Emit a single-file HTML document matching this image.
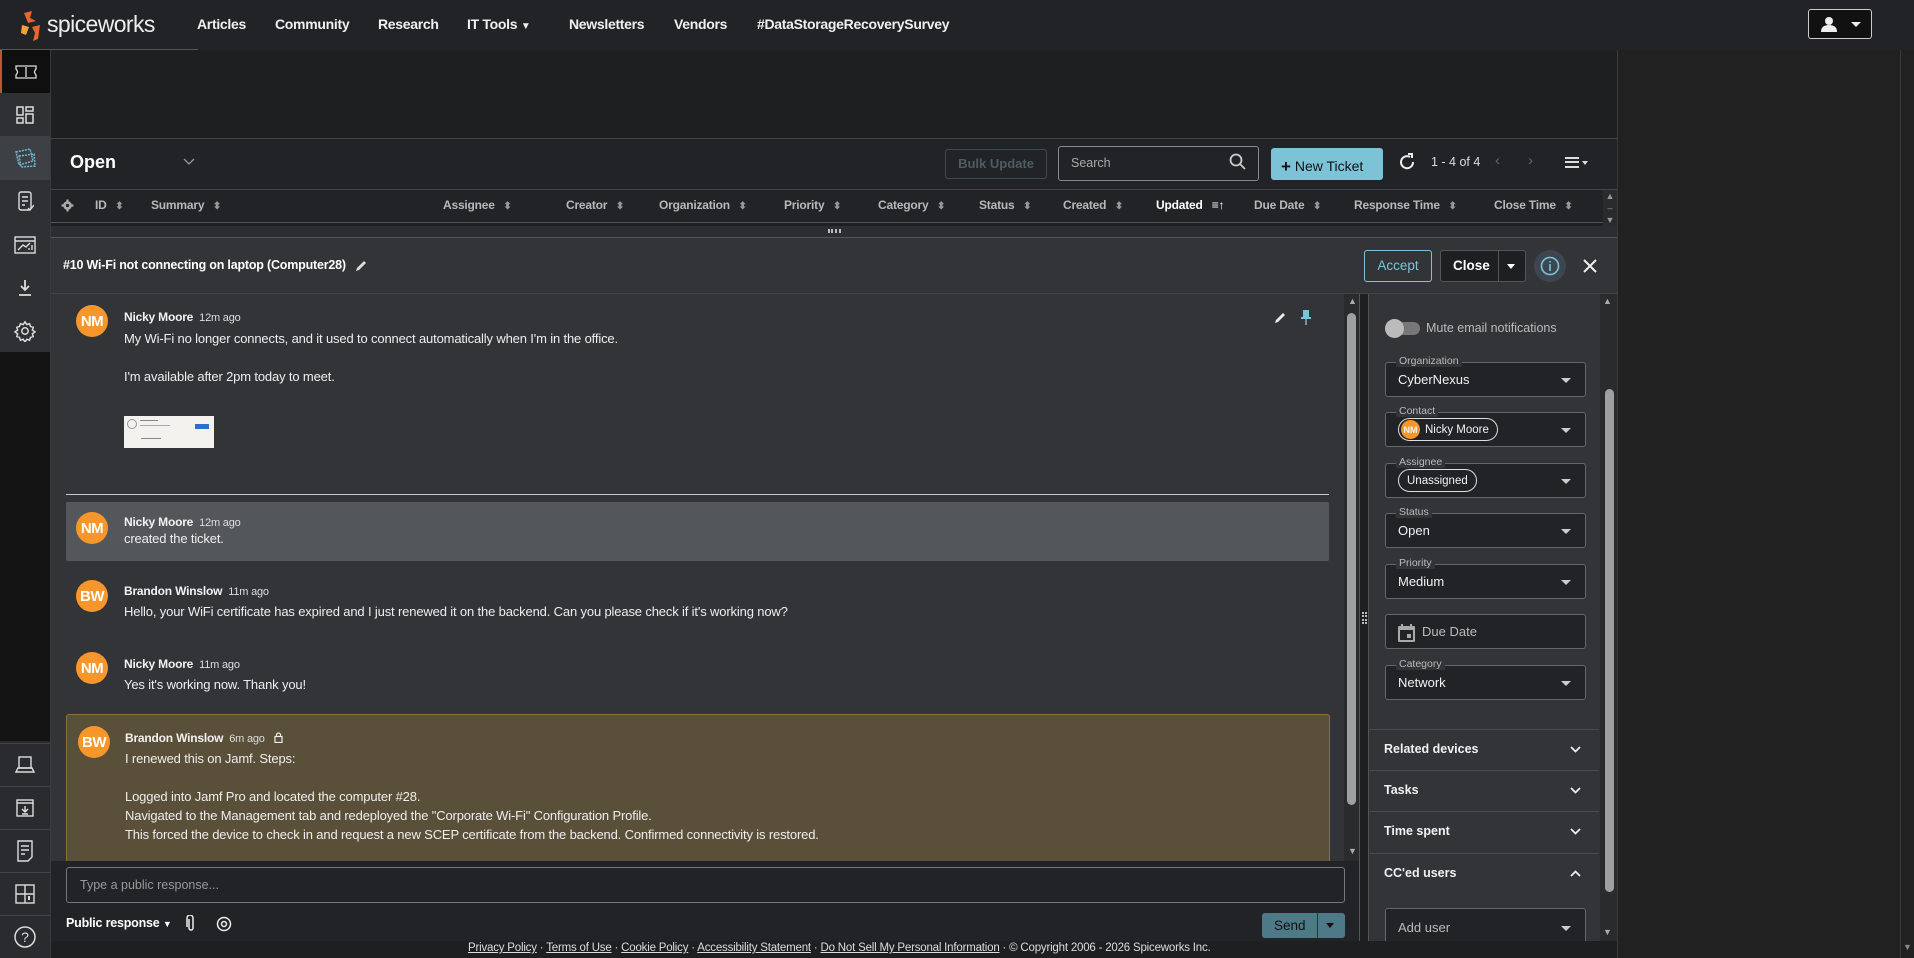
<!DOCTYPE html>
<html><head><meta charset="utf-8"><style>
*{box-sizing:border-box;margin:0;padding:0}
body{width:1914px;height:958px;overflow:hidden;background:#212121;font-family:"Liberation Sans",sans-serif;color:#e8e8e8;position:relative}
.a{position:absolute}
.nav{left:0;top:0;width:1914px;height:50px;background:#222326}
.nav .it{position:absolute;top:16px;font-size:14px;font-weight:bold;color:#f0f0f0;letter-spacing:-0.3px}
.sb{left:0;top:50px;width:51px;height:908px;background:#141414;border-right:1px solid #3a3a3a}
.sbi{position:absolute;left:0;width:50px;height:43px;display:flex;align-items:center;justify-content:center}
.main{left:51px;top:50px;width:1566px;height:908px;background:#1e1f21}
.hd{position:absolute;top:198px;font-size:12px;font-weight:bold;color:#b8b8b8;letter-spacing:-0.2px}
.hd:after{content:" \2B0D";font-size:10px;color:#999;margin-left:6px}
.hd.n:after{content:""}
.av{position:absolute;width:32px;height:32px;border-radius:50%;background:#f7962a;color:#fff;font-weight:bold;font-size:15px;display:flex;align-items:center;justify-content:center;letter-spacing:-0.5px}
.nm{position:absolute;font-size:12px;font-weight:bold;color:#f2f2f2;letter-spacing:-0.2px}
.nm span{font-weight:normal;font-size:11px;color:#ddd;margin-left:6px}
.tx{position:absolute;font-size:13px;color:#eee;letter-spacing:-0.15px}
.fld{position:absolute;left:1385px;width:201px;height:35px;border:1px solid #666;border-radius:3px;background:#222326}
.fld .lb{position:absolute;left:10px;top:-8px;font-size:10.5px;color:#bbb;background:#333437;padding:0 3px;line-height:12px}
.fld .v{position:absolute;left:12px;top:9px;font-size:13px;color:#f2f2f2}
.fld .dd{position:absolute;right:14px;top:15px;width:0;height:0;border-left:5px solid transparent;border-right:5px solid transparent;border-top:5px solid #ccc}
.pill{position:absolute;left:12px;top:5px;height:23px;border:1.5px solid #ddd;border-radius:12px;font-size:11.5px;color:#f2f2f2;display:flex;align-items:center;padding:0 8px}
.sec{position:absolute;left:1370px;width:229px;height:41px;border-top:1px solid #4a4b4d;font-size:12.5px;font-weight:bold;color:#f2f2f2;padding:12px 0 0 14px}
.sec svg{position:absolute;right:18px;top:16px}
</style></head><body>

<div class="a nav">
  <svg class="a" style="left:18px;top:9px" width="30" height="34" viewBox="0 0 30 34"><path d="M6 4 L14 2 L12 9 L18 12 L10 14Z" fill="#e7662a"/><path d="M4 16 L11 18 L8 26 L3 24Z" fill="#f4a13a"/><path d="M14 18 L22 16 L20 30 L15 32 L17 24Z" fill="#e7662a"/></svg>
  <div class="a" style="left:47px;top:11px;font-size:23px;color:#eee;letter-spacing:-0.6px">spiceworks</div>
  <div class="a" style="left:0;top:49px;width:198px;height:1px;background:#555"></div>
  <div class="it" style="left:197px">Articles</div>
  <div class="it" style="left:275px">Community</div>
  <div class="it" style="left:378px">Research</div>
  <div class="it" style="left:467px">IT Tools <span style="font-size:10px">&#9660;</span></div>
  <div class="it" style="left:569px">Newsletters</div>
  <div class="it" style="left:674px">Vendors</div>
  <div class="it" style="left:757px">#DataStorageRecoverySurvey</div>
  <div class="a" style="left:1808px;top:9px;width:64px;height:30px;border:1px solid #ccc;border-radius:3px;background:#111">
    <svg class="a" style="left:12px;top:6px" width="16" height="16" viewBox="0 0 16 16"><circle cx="8" cy="5" r="4" fill="#eee"/><path d="M0 16 Q0 9 8 9 Q16 9 16 16Z" fill="#eee"/></svg>
    <div class="a" style="left:42px;top:12px;border-left:5px solid transparent;border-right:5px solid transparent;border-top:5px solid #eee"></div>
  </div>
</div>
<div class="a" style="left:1900px;top:50px;width:1px;height:908px;background:#3a3a3a"></div>

<div class="a sb">
  <div class="a" style="left:0;top:0;width:50px;height:302px;background:#2f3033"></div>
  <div class="sbi" style="top:0;background:#0f0f0f;border-left:2px solid #c0562a"><svg width="22" height="14" viewBox="0 0 22 14"><path d="M1 1H21V4Q18 7 21 10V13H1V10Q4 7 1 4Z M11 2V12" fill="none" stroke="#ddd" stroke-width="1.3"/></svg></div>
  <div class="sbi" style="top:43px"><svg width="18" height="18" viewBox="0 0 18 18" fill="none" stroke="#ddd" stroke-width="1.5"><rect x="1" y="1" width="6" height="8"/><rect x="10" y="1" width="7" height="4"/><rect x="1" y="12" width="6" height="5"/><rect x="10" y="8" width="7" height="9"/></svg></div>
  <div class="sbi" style="top:86px;background:#3d4145;height:44px"><svg width="22" height="20" viewBox="0 0 22 20" fill="none" stroke="#6fb8cf" stroke-width="1.5" stroke-dasharray="2 1"><path d="M2 4 L16 1 L19 13 L5 17Z"/><path d="M5 8 L20 6 L21 18 L7 19Z"/></svg></div>
  <div class="sbi" style="top:130px"><svg width="18" height="22" viewBox="0 0 18 22" fill="none" stroke="#ddd" stroke-width="1.4"><rect x="3" y="1" width="12" height="18" rx="2"/><path d="M6 6H12M6 10H12M6 14H9M12 17L14 19L18 14"/></svg></div>
  <div class="sbi" style="top:173px"><svg width="22" height="18" viewBox="0 0 22 18" fill="none" stroke="#ddd" stroke-width="1.4"><rect x="1" y="1" width="20" height="16"/><path d="M1 5H21M4 14L9 9L12 11L16 7M15 14V12M18 14V9"/></svg></div>
  <div class="sbi" style="top:216px"><svg width="18" height="18" viewBox="0 0 18 18" fill="none" stroke="#ddd" stroke-width="1.8"><path d="M9 1V11M5 7L9 11L13 7M3 16H15"/></svg></div>
  <div class="sbi" style="top:259px"><svg width="22" height="22" viewBox="0 0 24 24" fill="none" stroke="#ddd" stroke-width="1.6"><circle cx="12" cy="12" r="3.5"/><path d="M12 2l2 3 3-1 1 3 3 1-1 3 3 2-3 2 1 3-3 1-1 3-3-1-2 3-2-3-3 1-1-3-3-1 1-3-3-2 3-2-1-3 3-1 1-3 3 1z"/></svg></div>
  <div class="a" style="left:0;top:691px;width:50px;height:217px;background:#2a2b2e"></div>
  <div class="sbi" style="top:693px;border-top:1px solid #444"><svg width="20" height="18" viewBox="0 0 20 18" fill="none" stroke="#ddd" stroke-width="1.4"><rect x="4" y="1" width="12" height="11"/><path d="M1 16H19L17 12H3Z"/></svg></div>
  <div class="sbi" style="top:736px;border-top:1px solid #444"><svg width="18" height="18" viewBox="0 0 18 18" fill="none" stroke="#ddd" stroke-width="1.4"><rect x="1" y="1" width="16" height="16"/><path d="M1 4H17M9 7V13M6 10L9 13L12 10M6 15H12"/></svg></div>
  <div class="sbi" style="top:779px;border-top:1px solid #444"><svg width="16" height="22" viewBox="0 0 16 22" fill="none" stroke="#ddd" stroke-width="1.4"><path d="M1 1H15V17L11 21H1Z M4 6H12M4 10H12M4 14H8"/></svg></div>
  <div class="sbi" style="top:822px;border-top:1px solid #444"><svg width="20" height="20" viewBox="0 0 20 20" fill="none" stroke="#ddd" stroke-width="1.4"><rect x="1" y="1" width="18" height="18"/><path d="M1 10H19M10 1V19"/><path d="M14 12V16" stroke-width="2"/></svg></div>
  <div class="sbi" style="top:865px;border-top:1px solid #444"><svg width="22" height="22" viewBox="0 0 22 22" fill="none" stroke="#ddd" stroke-width="1.5"><circle cx="11" cy="11" r="10"/><text x="11" y="16" font-size="14" fill="#ddd" stroke="none" text-anchor="middle" font-family="Liberation Sans">?</text></svg></div>
</div>

<div class="a main"></div>
<div class="a" style="left:51px;top:138px;width:1566px;height:1px;background:#444"></div>
<div class="a" style="left:51px;top:139px;width:1566px;height:50px;background:#222326"></div>
<div class="a" style="left:70px;top:152px;font-size:18px;font-weight:bold;color:#fff">Open</div>
<svg class="a" style="left:183px;top:158px" width="12" height="8" viewBox="0 0 12 8"><path d="M1 1L6 6L11 1" fill="none" stroke="#999" stroke-width="1.3"/></svg>
<div class="a" style="left:945px;top:149px;width:102px;height:30px;border:1px solid #3b4a4e;border-radius:3px;color:#4d5d62;font-size:13px;font-weight:bold;text-align:center;line-height:28px">Bulk Update</div>
<div class="a" style="left:1058px;top:146px;width:201px;height:35px;border:1px solid #888;border-radius:3px;color:#aaa;font-size:12.5px;padding:9px 12px">Search</div>
<svg class="a" style="left:1229px;top:153px" width="18" height="18" viewBox="0 0 18 18" fill="none" stroke="#ccc" stroke-width="1.8"><circle cx="7" cy="7" r="5.5"/><path d="M11 11L16 16"/></svg>
<div class="a" style="left:1271px;top:148px;width:112px;height:32px;border-radius:3px;background:#7dc3d7;color:#111;font-size:14px;padding:8px 0 0 10px"><b style="font-size:17px;position:relative;top:1px">+</b> New Ticket</div>
<svg class="a" style="left:1398px;top:153px" width="18" height="18" viewBox="0 0 18 18" fill="none" stroke="#eee" stroke-width="2"><path d="M15 9A6 6 0 1 1 12 4"/><path d="M10 1H14V5"/></svg>
<div class="a" style="left:1431px;top:155px;font-size:12.5px;color:#ddd">1 - 4 of 4</div>
<div class="a" style="left:1495px;top:152px;font-size:15px;color:#666">&#x2039;</div>
<div class="a" style="left:1528px;top:152px;font-size:15px;color:#666">&#x203A;</div>
<svg class="a" style="left:1565px;top:157px" width="24" height="12" viewBox="0 0 24 12" fill="#ddd"><rect x="0" y="0" width="14" height="2"/><rect x="0" y="4" width="14" height="2"/><rect x="0" y="9" width="14" height="2"/><path d="M17 4H23L20 8Z"/></svg>
<div class="a" style="left:51px;top:189px;width:1566px;height:1px;background:#444"></div>
<div class="a" style="left:51px;top:190px;width:1566px;height:31px;background:#222326"></div>
<svg class="a" style="left:61px;top:199px" width="13" height="13" viewBox="0 0 24 24"><circle cx="12" cy="12" r="8" fill="#aaa"/><circle cx="12" cy="12" r="3" fill="#222"/><path d="M10 1h4v5h-4zM10 18h4v5h-4zM1 10h5v4H1zM18 10h5v4h-5z" fill="#aaa"/></svg>
<div class="hd" style="left:95px">ID</div>
<div class="hd" style="left:151px">Summary</div>
<div class="hd" style="left:443px">Assignee</div>
<div class="hd" style="left:566px">Creator</div>
<div class="hd" style="left:659px">Organization</div>
<div class="hd" style="left:784px">Priority</div>
<div class="hd" style="left:878px">Category</div>
<div class="hd" style="left:979px">Status</div>
<div class="hd" style="left:1063px">Created</div>
<div class="hd n" style="left:1156px;color:#fff">Updated <span style="margin-left:6px">&#8801;&#8593;</span></div>
<div class="hd" style="left:1254px">Due Date</div>
<div class="hd" style="left:1354px">Response Time</div>
<div class="hd" style="left:1494px">Close Time</div>
<div class="a" style="left:1603px;top:190px;width:14px;height:36px;background:#2a2b2d;color:#999;font-size:9px;text-align:center;line-height:12px">&#9650;<br>&#8211;<br>&#9660;</div>
<div class="a" style="left:51px;top:222px;width:1552px;height:1px;background:#555"></div>
<div class="a" style="left:51px;top:226px;width:1566px;height:12px;background:#2c2d30;border-bottom:1px solid #555"></div>
<div class="a" style="left:828px;top:229px;width:13px;height:4px;border-top:2px dotted #bbb;border-bottom:2px dotted #bbb"></div>

<div class="a" style="left:51px;top:238px;width:1566px;height:56px;background:#333437;border-bottom:1px solid #444"></div>
<div class="a" style="left:63px;top:258px;font-size:12.5px;font-weight:bold;color:#fff;letter-spacing:-0.2px">#10 Wi-Fi not connecting on laptop (Computer28)</div>
<svg class="a" style="left:354px;top:259px" width="14" height="14" viewBox="0 0 14 14"><path d="M2 12L3 9L10 2L12 4L5 11Z" fill="#ddd"/></svg>
<div class="a" style="left:1364px;top:250px;width:68px;height:32px;border:1px solid #7dc3d7;border-radius:3px;color:#7dc3d7;font-size:13.5px;text-align:center;line-height:30px">Accept</div>
<div class="a" style="left:1440px;top:250px;width:86px;height:32px;border:1px solid #555;border-radius:3px;background:#1e1f21;color:#fff;font-size:13.5px;font-weight:bold;line-height:30px;padding-left:12px">Close<span class="a" style="left:57px;top:0;width:1px;height:30px;background:#555"></span><span class="a" style="left:66px;top:13px;border-left:4px solid transparent;border-right:4px solid transparent;border-top:5px solid #fff"></span></div>
<div class="a" style="left:1534px;top:250px;width:32px;height:32px;border-radius:50%;background:#3d4650"></div>
<svg class="a" style="left:1540px;top:256px" width="20" height="20" viewBox="0 0 20 20" fill="none" stroke="#7dc3d7" stroke-width="1.6"><circle cx="10" cy="10" r="8.5"/><path d="M10 8V15M10 5V6.5"/></svg>
<svg class="a" style="left:1583px;top:259px" width="14" height="14" viewBox="0 0 14 14" stroke="#eee" stroke-width="2"><path d="M1 1L13 13M13 1L1 13"/></svg>

<div class="a" style="left:51px;top:294px;width:1293px;height:567px;background:#333437"></div>
<div class="a" style="left:1344px;top:294px;width:15px;height:567px;background:#2a2b2d"></div>
<div class="a" style="left:1348px;top:296px;color:#aaa;font-size:9px">&#9650;</div>
<div class="a" style="left:1347px;top:313px;width:9px;height:492px;border-radius:5px;background:#a0a0a0"></div>
<div class="a" style="left:1348px;top:846px;color:#aaa;font-size:9px">&#9660;</div>
<div class="a" style="left:1359px;top:294px;width:1px;height:647px;background:#555"></div>
<div class="a" style="left:1362px;top:612px;width:5px;height:12px;border-left:2px dotted #bbb;border-right:2px dotted #bbb"></div>
<div class="a" style="left:1368px;top:294px;width:1px;height:647px;background:#555"></div>

<div class="av" style="left:76px;top:305px">NM</div>
<div class="nm" style="left:124px;top:310px">Nicky Moore<span>12m ago</span></div>
<svg class="a" style="left:1273px;top:311px" width="14" height="14" viewBox="0 0 14 14"><path d="M2 12L3 9L10 2L12 4L5 11Z" fill="#eee"/></svg>
<svg class="a" style="left:1300px;top:310px" width="12" height="16" viewBox="0 0 12 16" fill="#7dc3d7"><rect x="3" y="0" width="6" height="7"/><rect x="1" y="7" width="10" height="2"/><rect x="5.3" y="9" width="1.4" height="6"/></svg>
<div class="tx" style="left:124px;top:331px">My Wi-Fi no longer connects, and it used to connect automatically when I'm in the office.</div>
<div class="tx" style="left:124px;top:369px">I'm available after 2pm today to meet.</div>
<div class="a" style="left:124px;top:416px;width:90px;height:32px;background:#f4f2ee">
  <div class="a" style="left:3px;top:3px;width:10px;height:10px;border:1px solid #999;border-radius:50%"></div>
  <div class="a" style="left:16px;top:4px;width:18px;height:1px;background:#888"></div>
  <div class="a" style="left:16px;top:9px;width:30px;height:1px;background:#aaa"></div>
  <div class="a" style="left:71px;top:8px;width:14px;height:5px;background:#2c6fd0"></div>
  <div class="a" style="left:17px;top:22px;width:20px;height:1px;background:#888"></div>
</div>
<div class="a" style="left:66px;top:494px;width:1263px;height:1px;background:#c8c8c8"></div>
<div class="a" style="left:66px;top:502px;width:1263px;height:59px;background:#54575a;border-radius:2px"></div>
<div class="av" style="left:76px;top:512px">NM</div>
<div class="nm" style="left:124px;top:515px">Nicky Moore<span>12m ago</span></div>
<div class="tx" style="left:124px;top:531px">created the ticket.</div>
<div class="av" style="left:76px;top:580px">BW</div>
<div class="nm" style="left:124px;top:584px">Brandon Winslow<span>11m ago</span></div>
<div class="tx" style="left:124px;top:604px">Hello, your WiFi certificate has expired and I just renewed it on the backend. Can you please check if it's working now?</div>
<div class="av" style="left:76px;top:652px">NM</div>
<div class="nm" style="left:124px;top:657px">Nicky Moore<span>11m ago</span></div>
<div class="tx" style="left:124px;top:677px">Yes it's working now. Thank you!</div>
<div class="a" style="left:66px;top:714px;width:1264px;height:150px;background:#5a4f38;border:1px solid #8c7232;border-bottom:none;border-radius:3px 3px 0 0"></div>
<div class="av" style="left:78px;top:726px">BW</div>
<div class="nm" style="left:125px;top:731px">Brandon Winslow<span>6m ago</span>
<svg style="margin-left:6px;vertical-align:-1px" width="9" height="11" viewBox="0 0 9 11" fill="none" stroke="#eee" stroke-width="1.2"><rect x="1" y="4.5" width="7" height="6"/><path d="M2.5 4.5V3A2 2 0 0 1 6.5 3V4.5"/></svg></div>
<div class="tx" style="left:125px;top:751px">I renewed this on Jamf. Steps:</div>
<div class="tx" style="left:125px;top:789px">Logged into Jamf Pro and located the computer #28.</div>
<div class="tx" style="left:125px;top:808px">Navigated to the Management tab and redeployed the "Corporate Wi-Fi" Configuration Profile.</div>
<div class="tx" style="left:125px;top:827px">This forced the device to check in and request a new SCEP certificate from the backend. Confirmed connectivity is restored.</div>

<div class="a" style="left:51px;top:861px;width:1308px;height:80px;background:#222326"></div>
<div class="a" style="left:66px;top:867px;width:1279px;height:36px;border:1px solid #777;border-radius:3px;color:#999;font-size:12.5px;padding:10px 13px">Type a public response...</div>
<div class="a" style="left:66px;top:916px;font-size:12.5px;font-weight:bold;color:#fff;letter-spacing:-0.2px">Public response <span style="font-size:9px">&#9660;</span></div>
<svg class="a" style="left:186px;top:915px" width="10" height="18" viewBox="0 0 10 18" fill="none" stroke="#eee" stroke-width="1.5"><path d="M3 4V13A2 2 0 0 0 7 13V3A3 3 0 0 0 1 3V12"/></svg>
<svg class="a" style="left:216px;top:916px" width="16" height="16" viewBox="0 0 16 16" fill="none" stroke="#eee" stroke-width="1.5"><circle cx="8" cy="8" r="6.5"/><circle cx="8" cy="8" r="2.5"/></svg>
<div class="a" style="left:1262px;top:913px;width:83px;height:25px;border-radius:3px;background:#4e7a88;color:#111;font-size:13.5px;line-height:25px;padding-left:12px">Send<span class="a" style="left:55px;top:0;width:1px;height:25px;background:#333"></span><span class="a" style="left:64px;top:10px;border-left:4px solid transparent;border-right:4px solid transparent;border-top:5px solid #111"></span></div>

<div class="a" style="left:1369px;top:294px;width:231px;height:647px;background:#333437"></div>
<div class="a" style="left:1600px;top:294px;width:17px;height:647px;background:#2a2b2d"></div>
<div class="a" style="left:1603px;top:296px;color:#aaa;font-size:9px">&#9650;</div>
<div class="a" style="left:1605px;top:389px;width:9px;height:503px;border-radius:5px;background:#a0a0a0"></div>
<div class="a" style="left:1603px;top:927px;color:#aaa;font-size:9px">&#9660;</div>
<div class="a" style="left:1386px;top:322px;width:34px;height:13px;border-radius:7px;background:#777"></div>
<div class="a" style="left:1385px;top:319px;width:19px;height:19px;border-radius:50%;background:#bbb"></div>
<div class="a" style="left:1426px;top:321px;font-size:12.5px;color:#bbb">Mute email notifications</div>
<div class="fld" style="top:362px"><span class="lb">Organization</span><span class="v">CyberNexus</span><span class="dd"></span></div>
<div class="fld" style="top:412px"><span class="lb">Contact</span><span class="pill" style="padding-left:2px"><span style="width:19px;height:19px;border-radius:50%;background:#f7962a;font-size:9px;font-weight:bold;display:inline-flex;align-items:center;justify-content:center;margin-right:5px">NM</span>Nicky Moore</span><span class="dd"></span></div>
<div class="fld" style="top:463px"><span class="lb">Assignee</span><span class="pill">Unassigned</span><span class="dd"></span></div>
<div class="fld" style="top:513px"><span class="lb">Status</span><span class="v">Open</span><span class="dd"></span></div>
<div class="fld" style="top:564px"><span class="lb">Priority</span><span class="v">Medium</span><span class="dd"></span></div>
<div class="fld" style="top:614px"><svg class="a" style="left:12px;top:9px" width="17" height="18" viewBox="0 0 17 18" fill="#aaa"><rect x="0" y="2" width="17" height="16" rx="1"/><rect x="2" y="6" width="13" height="10" fill="#222326"/><rect x="9" y="10" width="4" height="4"/><rect x="3" y="0" width="2" height="4"/><rect x="12" y="0" width="2" height="4"/></svg><span class="v" style="left:36px;color:#bbb">Due Date</span></div>
<div class="fld" style="top:665px"><span class="lb">Category</span><span class="v">Network</span><span class="dd"></span></div>
<div class="sec" style="top:729px">Related devices<svg width="11" height="7" viewBox="0 0 11 7"><path d="M1 1L5.5 5.5L10 1" fill="none" stroke="#eee" stroke-width="1.8"/></svg></div>
<div class="sec" style="top:770px">Tasks<svg width="11" height="7" viewBox="0 0 11 7"><path d="M1 1L5.5 5.5L10 1" fill="none" stroke="#eee" stroke-width="1.8"/></svg></div>
<div class="sec" style="top:811px">Time spent<svg width="11" height="7" viewBox="0 0 11 7"><path d="M1 1L5.5 5.5L10 1" fill="none" stroke="#eee" stroke-width="1.8"/></svg></div>
<div class="sec" style="top:853px;border-bottom:none">CC'ed users<svg width="11" height="7" viewBox="0 0 11 7"><path d="M1 6L5.5 1.5L10 6" fill="none" stroke="#eee" stroke-width="1.8"/></svg></div>
<div class="fld" style="top:908px;height:40px"><span class="v" style="top:11px;color:#bbb">Add user</span><span class="dd" style="top:17px"></span></div>

<div class="a" style="left:51px;top:941px;width:1566px;height:17px;background:#1e1f21"></div>
<div class="a" style="left:468px;top:942px;font-size:11.5px;color:#ddd;white-space:nowrap;letter-spacing:-0.2px"><u>Privacy Policy</u> · <u>Terms of Use</u> · <u>Cookie Policy</u> · <u>Accessibility Statement</u> · <u>Do Not Sell My Personal Information</u> · © Copyright 2006 - 2026 Spiceworks Inc.</div>
<div class="a" style="left:1617px;top:50px;width:1px;height:908px;background:#3a3a3a"></div>
<div class="a" style="left:1903px;top:942px;color:#888;font-size:9px">&#9660;</div>
</body></html>
